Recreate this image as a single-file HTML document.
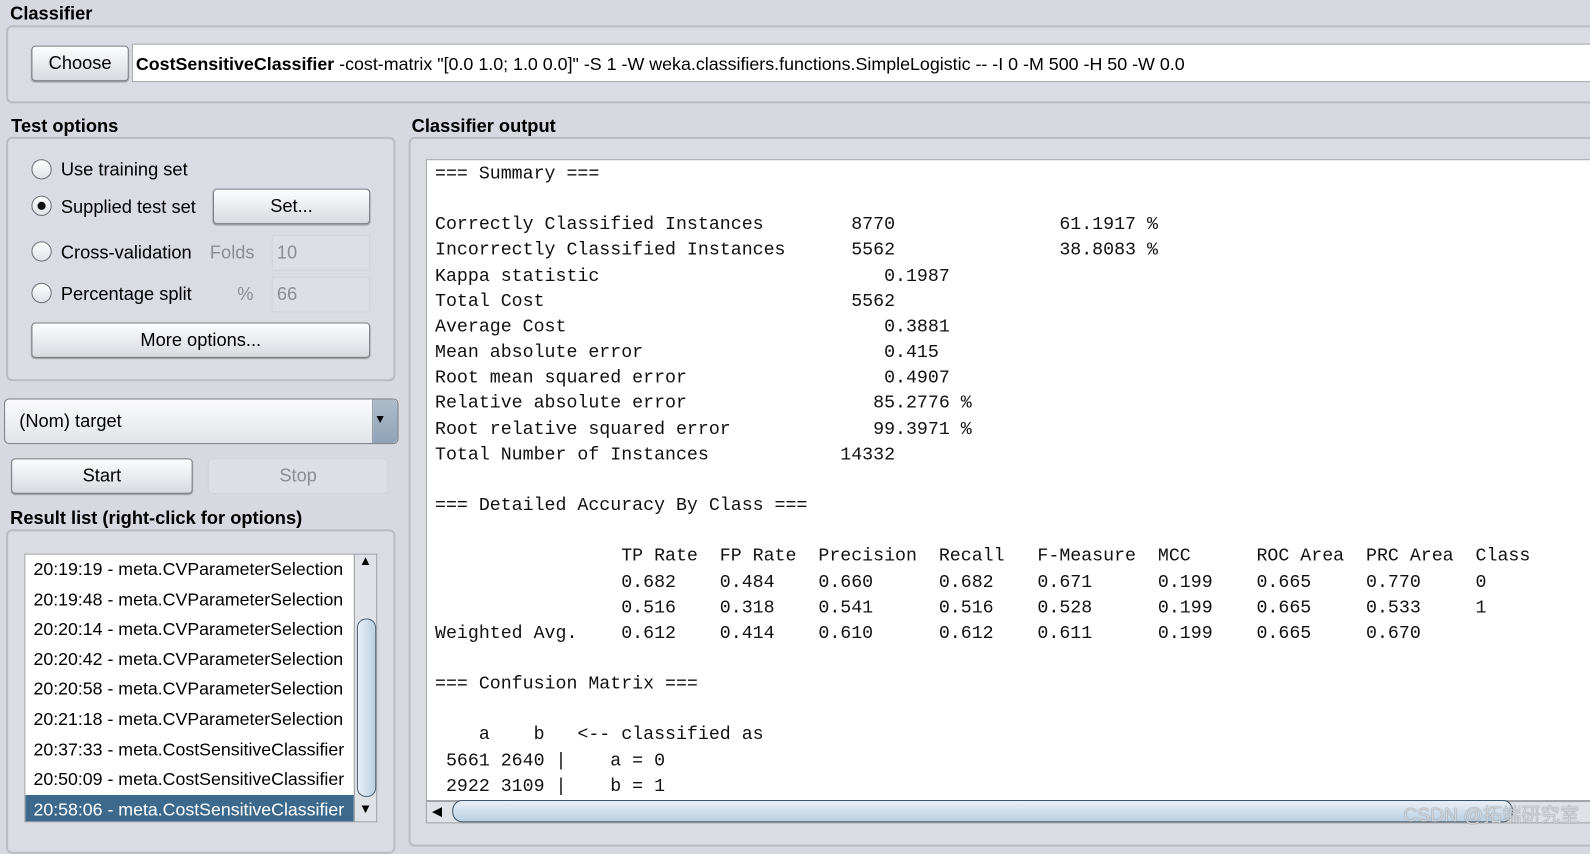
<!DOCTYPE html>
<html><head><meta charset="utf-8"><style>
*{box-sizing:border-box;margin:0;padding:0}
body{width:1590px;height:831px;background:#d6d9df;font-family:"Liberation Sans",Arial,sans-serif;font-size:18px;color:#000;position:relative;overflow:hidden}
#w{position:absolute;left:0;top:0;width:1568px;height:820px;transform:scale(1.014);transform-origin:0 0}
.a{position:absolute}
.lbl{font-weight:bold;font-size:18px}
.grp{border:2px solid #b9bcc2;border-radius:6px;background:#d9dce2}
.btn{position:absolute;border:1px solid #7a7d82;border-radius:4px;background:linear-gradient(#fdfdfe,#e6e8ec 60%,#d7dade);text-align:center;font-size:18px;box-shadow:0 1px 1px #999}
.radio{position:absolute;width:20px;height:20px;border-radius:50%;border:1px solid #6d7075;background:linear-gradient(#fff,#dfe1e5)}
.tf{position:absolute;background:#dcdfe4;border:1px solid #d0d3d8;color:#8a8d92;padding-left:4px}
pre{font-family:"Liberation Mono","Courier New",monospace;font-size:18px;line-height:25.15px;color:#111}
.item{height:29.6px;line-height:29.6px;padding-left:8px;font-size:17.5px;white-space:nowrap}
</style></head><body><div id="w">
<div class="a lbl" style="left:10px;top:3px">Classifier</div>
<div class="a grp" style="left:6px;top:25px;width:1600px;height:77px"></div>
<div class="btn" style="left:31px;top:45px;width:96px;height:35px;line-height:33px">Choose</div>
<div class="a" style="left:130px;top:43px;width:1470px;height:38px;background:#fff;border:1px solid #9ea1a6;line-height:38px;padding-left:3px;font-size:17.6px;white-space:nowrap"><b>CostSensitiveClassifier</b> -cost-matrix "[0.0 1.0; 1.0 0.0]" -S 1 -W weka.classifiers.functions.SimpleLogistic -- -I 0 -M 500 -H 50 -W 0.0</div>

<div class="a lbl" style="left:11px;top:114px">Test options</div>
<div class="a grp" style="left:6px;top:135px;width:384px;height:241px"></div>
<div class="radio" style="left:31px;top:157px"></div>
<div class="a" style="left:60px;top:157px">Use training set</div>
<div class="radio" style="left:31px;top:193px"></div>
<div class="a" style="left:37px;top:199px;width:8px;height:8px;border-radius:50%;background:#111"></div>
<div class="a" style="left:60px;top:194px">Supplied test set</div>
<div class="btn" style="left:210px;top:186px;width:155px;height:35px;line-height:33px">Set...</div>
<div class="radio" style="left:31px;top:238px"></div>
<div class="a" style="left:60px;top:239px">Cross-validation</div>
<div class="a" style="left:207px;top:239px;color:#8a8d92">Folds</div>
<div class="tf" style="left:268px;top:232px;width:97px;height:35px;line-height:33px">10</div>
<div class="radio" style="left:31px;top:279px"></div>
<div class="a" style="left:60px;top:280px">Percentage split</div>
<div class="a" style="left:234px;top:280px;color:#8a8d92">%</div>
<div class="tf" style="left:268px;top:273px;width:97px;height:35px;line-height:33px">66</div>
<div class="btn" style="left:31px;top:318px;width:334px;height:35px;line-height:33px">More options...</div>

<div class="a" style="left:4px;top:393px;width:389px;height:45px;border:1px solid #7a7d82;border-radius:5px;background:linear-gradient(#fbfbfc,#e2e4e8);padding-left:14px;line-height:42px">(Nom) target</div>
<div class="a" style="left:367px;top:394px;width:25px;height:43px;background:linear-gradient(#aebccb,#8fa2b6);border-left:1px solid #7a8896;border-radius:0 5px 5px 0"></div>
<div class="a" style="left:369px;top:406px;font-size:12px">▼</div>
<div class="btn" style="left:11px;top:452px;width:179px;height:35px;line-height:33px">Start</div>
<div class="btn" style="left:205px;top:452px;width:178px;height:35px;line-height:33px;color:#8a8d92;border-color:#cfd2d6;box-shadow:none;background:#dcdfe4">Stop</div>

<div class="a lbl" style="left:10px;top:501px">Result list (right-click for options)</div>
<div class="a grp" style="left:6px;top:522px;width:384px;height:320px"></div>
<div class="a" style="left:24px;top:546px;width:326px;height:265px;background:#fff;border:1px solid #9ea1a6;overflow:hidden">
<div class="item">20:19:19 - meta.CVParameterSelection</div>
<div class="item">20:19:48 - meta.CVParameterSelection</div>
<div class="item">20:20:14 - meta.CVParameterSelection</div>
<div class="item">20:20:42 - meta.CVParameterSelection</div>
<div class="item">20:20:58 - meta.CVParameterSelection</div>
<div class="item">20:21:18 - meta.CVParameterSelection</div>
<div class="item">20:37:33 - meta.CostSensitiveClassifier</div>
<div class="item">20:50:09 - meta.CostSensitiveClassifier</div>
<div class="item" style="background:#3d6a8c;color:#fff">20:58:06 - meta.CostSensitiveClassifier</div>
</div>
<div class="a" style="left:349px;top:546px;width:23px;height:265px;background:#dfe2e6;border:1px solid #9ea1a6"></div>
<div class="a" style="left:354px;top:545px;font-size:13px">▲</div>
<div class="a" style="left:352px;top:610px;width:19px;height:176px;border:1px solid #4d6275;border-radius:9px;background:linear-gradient(90deg,#e9f0f7,#b9cfe2)"></div>
<div class="a" style="left:354px;top:790px;font-size:13px">▼</div>

<div class="a lbl" style="left:406px;top:114px">Classifier output</div>
<div class="a grp" style="left:403px;top:135px;width:1200px;height:700px"></div>
<div class="a" style="left:420px;top:157px;width:1175px;height:633px;background:#fff;border:1px solid #9ea1a6"></div>
<pre class="a" style="left:429px;top:160px">=== Summary ===

Correctly Classified Instances        8770               61.1917 %
Incorrectly Classified Instances      5562               38.8083 %
Kappa statistic                          0.1987
Total Cost                            5562
Average Cost                             0.3881
Mean absolute error                      0.415
Root mean squared error                  0.4907
Relative absolute error                 85.2776 %
Root relative squared error             99.3971 %
Total Number of Instances            14332

=== Detailed Accuracy By Class ===

                 TP Rate  FP Rate  Precision  Recall   F-Measure  MCC      ROC Area  PRC Area  Class
                 0.682    0.484    0.660      0.682    0.671      0.199    0.665     0.770     0
                 0.516    0.318    0.541      0.516    0.528      0.199    0.665     0.533     1
Weighted Avg.    0.612    0.414    0.610      0.612    0.611      0.199    0.665     0.670

=== Confusion Matrix ===

    a    b   <-- classified as
 5661 2640 |    a = 0
 2922 3109 |    b = 1</pre>
<div class="a" style="left:420px;top:790px;width:1175px;height:22px;background:#dfe2e6;border:1px solid #9ea1a6"></div>
<div class="a" style="left:426px;top:792px;font-size:13px">◀</div>
<div class="a" style="left:446px;top:789px;width:1046px;height:22px;border:1px solid #3f5568;border-radius:10px;background:linear-gradient(#e9f0f7,#b9cfe2)"></div>
<div class="a" style="left:1384px;top:789px;font-size:19px;color:#d0d3d8;font-family:'Liberation Sans','Noto Sans CJK SC',sans-serif;text-shadow:0 0 1px #666">CSDN @拓端研究室</div>
</div></body></html>
